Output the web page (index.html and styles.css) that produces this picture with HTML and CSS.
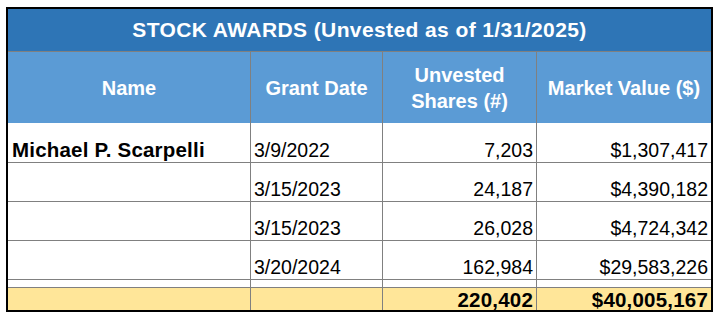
FILE: index.html
```html
<!DOCTYPE html>
<html lang="en">
<head>
<meta charset="utf-8">
<title>Stock Awards</title>
<link rel="stylesheet" href="styles.css">
</head>
<body>
<div class="sheet">
  <div class="cell title">STOCK AWARDS (Unvested as of 1/31/2025)</div>

  <div class="cell head">Name</div>
  <div class="cell head">Grant Date</div>
  <div class="cell head">Unvested Shares (#)</div>
  <div class="cell head last">Market Value ($)</div>

  <div class="cell name">Michael P. Scarpelli</div>
  <div class="cell">3/9/2022</div>
  <div class="cell num">7,203</div>
  <div class="cell num last">$1,307,417</div>

  <div class="cell"></div>
  <div class="cell">3/15/2023</div>
  <div class="cell num">24,187</div>
  <div class="cell num last">$4,390,182</div>

  <div class="cell"></div>
  <div class="cell">3/15/2023</div>
  <div class="cell num">26,028</div>
  <div class="cell num last">$4,724,342</div>

  <div class="cell"></div>
  <div class="cell">3/20/2024</div>
  <div class="cell num">162,984</div>
  <div class="cell num last">$29,583,226</div>

  <div class="cell spacer"></div>
  <div class="cell spacer"></div>
  <div class="cell spacer"></div>
  <div class="cell spacer last"></div>

  <div class="cell total"></div>
  <div class="cell total"></div>
  <div class="cell total num">220,402</div>
  <div class="cell total num last">$40,005,167</div>
</div>
</body>
</html>
```
FILE: styles.css
```css
html, body {
  margin: 0;
  padding: 0;
  background: #ffffff;
}

.sheet {
  display: grid;
  grid-template-columns: 243px 132px 154px 174px;
  grid-template-rows: 43px 71px 40px 39px 39px 39px 8px 22px;
  width: max-content;
  margin: 7px 0 0 6px;
  border: 2px solid #000000;
  font-family: "Liberation Sans", Arial, sans-serif;
  color: #000000;
}

.cell {
  box-sizing: border-box;
  display: flex;
  align-items: flex-end;
  justify-content: flex-start;
  padding: 0 4px 1px 3px;
  border-right: 1px solid #808080;
  border-bottom: 1px solid #808080;
  font-size: 19.5px;
  line-height: 22px;
  white-space: nowrap;
  overflow: hidden;
}

.last {
  border-right: none;
}

.title {
  grid-column: 1 / -1;
  border-right: none;
  background: #2e75b6;
  color: #ffffff;
  font-weight: bold;
  font-size: 21px;
  letter-spacing: 0.4px;
  line-height: 26px;
  justify-content: center;
  align-items: center;
  padding: 0;
}

.head {
  background: #5b9bd5;
  color: #ffffff;
  font-weight: bold;
  font-size: 20px;
  line-height: 26px;
  text-align: center;
  justify-content: center;
  align-items: center;
  white-space: normal;
  border-bottom: none;
  padding: 0 4px;
}

.name {
  font-weight: bold;
  font-size: 20.5px;
  letter-spacing: 0.2px;
  padding-left: 4px;
}

.num {
  justify-content: flex-end;
  padding-right: 3px;
}

.total {
  background: #ffe699;
  font-weight: bold;
  font-size: 20.5px;
  letter-spacing: 0.2px;
  line-height: 20px;
  border-bottom: none;
  padding-bottom: 0;
}
```
